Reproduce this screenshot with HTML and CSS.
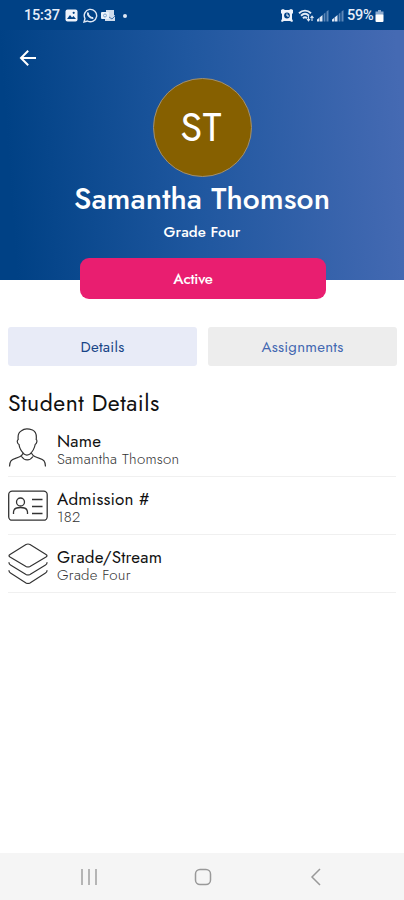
FILE: index.html
```
<!DOCTYPE html>
<html lang="en">
<head>
<meta charset="utf-8">
<title>Student Details</title>
<link rel="stylesheet" href="styles.css">
</head>
<body>
<div class="screen">
  <header class="statusbar">
    <div class="status-left">
      <span class="clock">15:37</span>
      <svg class="i-photo" width="13" height="13" viewBox="0 0 13 13"><rect x=".5" y=".5" width="12" height="12" rx="2" fill="#eef3fb"/><path d="M2 10l3-4 2 2.500 1.500-1.500L11 10z" fill="#004185"/><circle cx="8.700" cy="3.800" r="1.100" fill="#004185"/></svg>
      <svg class="i-chat" width="15" height="15" viewBox="0 0 15 15" fill="none" stroke="#dfe8f5"><path d="M1 14l1-3.500A6.200 6.200 0 1 1 4.500 13z" stroke-width="1.400"/><path d="M5 4.500c-.8 2.500 2.500 6 5.300 5.500" stroke-width="2"/></svg>
      <svg class="i-mail" width="15" height="13" viewBox="0 0 15 13"><path d="M5 1h8v5l1 .5V12H4V9H5z" fill="#cfdcec"/><rect x="0" y="3" width="8" height="7" rx="1" fill="#e9f1fa"/><circle cx="4" cy="6.500" r="1.500" fill="none" stroke="#7fa3cb"/><path d="M8 8l3 2 3-3" fill="none" stroke="#4a78ad"/></svg>
      <span class="dot"></span>
    </div>
    <div class="status-right">
      <svg width="12" height="13" viewBox="0 0 12 13"><path d="M0 1l2-1 2 1h4l2-1 2 1v3l-1 1v5l1 2-1 1-2-1H3l-2 1-1-1 1-2V5L0 4z" fill="#eef3fb"/><circle cx="6" cy="6.500" r="2.900" fill="#004185"/><path d="M6 4.500V7h2" stroke="#fff" fill="none"/></svg>
      <svg class="i-wifi" width="16" height="13" viewBox="0 0 16 13" fill="none" stroke="#e0e9f5" stroke-width="1.900"><path d="M1 4.200c3.500-3.400 8.500-3.400 12 0M3 6.700c2.400-2.200 5.600-2.200 8 0M5 9.200c1.300-1.200 2.700-1.200 4 0"/><path d="M10.500 7v4.500M9 10l1.500 1.800L12 10M14 12V7.500M12.500 9L14 7.200 15.500 9" stroke-width="1.100"/></svg>
      <svg class="i-signal" width="12" height="12" viewBox="0 0 12 12"><path d="M0 11.500V9.500L2 8v3.500zM2.500 11.500V7.500l3-2.500v6.500z" fill="#dfe8f5"/><path d="M6.700 11.500V4l1.700-1.500v9zM9.500 11.500V1.500L11.500 0v11.500z" fill="#5d87b7"/></svg>
      <svg class="i-signal" width="12" height="12" viewBox="0 0 12 12"><path d="M0 11.500V9.500L2 8v3.500zM2.500 11.500V7.500l3-2.500v6.500z" fill="#dfe8f5"/><path d="M6.700 11.500V4l1.700-1.500v9zM9.500 11.500V1.500L11.500 0v11.500z" fill="#5d87b7"/></svg>
      <span class="percent">59%</span>
      <svg width="9" height="12" viewBox="0 0 9 12"><path d="M3 0h3v1.500h2.500V5h-8V1.500H3z" fill="#8eabcf"/><rect x=".5" y="4.500" width="8" height="7.500" rx="1" fill="#fff"/></svg>
    </div>
  </header>
  <section class="hero">
    <svg class="back" width="18" height="18" viewBox="0 0 18 18" fill="none" stroke="#fff" stroke-width="2"><path d="M17 9H2.500M9.200 1.800L2 9l7.200 7.200"/></svg>
    <div class="avatar"><span class="initials">ST</span></div>
    <h1 class="name">Samantha Thomson</h1>
    <p class="grade">Grade Four</p>
    <div class="status"><span class="status-text">Active</span></div>
  </section>
  <nav class="tabs">
    <div class="tab tab-on">Details</div>
    <div class="tab">Assignments</div>
  </nav>
  <main class="details">
    <h2 class="heading">Student Details</h2>
    <div class="row">
      <svg class="icon" width="40" height="42" viewBox="0 0 40 42" fill="none" stroke="#333" stroke-width="1.200"><path d="M13.500 3.800C16 1.500 21 1.700 24.500 3c2.700 1.200 4.300 4.500 3.700 9.500 1.200.7.800 4-1 5-1 5-2.500 7-5.200 9.500-2 1.300-4.200 1.300-6 0-2.500-2.500-4.400-4.500-5-9.500-2-1-2.200-4-.8-5-.5-4 .3-7.200 3.300-8.700zM1.500 39.500c.2-5.500 1.700-7 6-8.200 4-1.100 6-1.700 7.700-5.300M37.500 39.500c-.2-5.500-1.700-7-6-8.200-4-1.100-6-1.700-8.200-5.300M13.500 29.500c3 4.500 8.500 4.500 11.500 0"/></svg>
      <div class="text"><span class="label">Name</span><span class="value">Samantha Thomson</span></div>
    </div>
    <div class="row">
      <svg class="icon" width="40" height="42" viewBox="0 0 40 42" fill="none" stroke="#333" stroke-width="1.300"><rect x=".7" y="6.200" width="38.500" height="29" rx="3.500"/><circle cx="12.500" cy="17" r="4"/><path d="M5.500 29v-2c0-4 3-4.500 7-4.500s7 .5 7 4.500v2M24 14.500h10.500M24 21.500h10.500M24 28.500h10.500"/></svg>
      <div class="text"><span class="label">Admission #</span><span class="value">182</span></div>
    </div>
    <div class="row">
      <svg class="icon" width="40" height="42" viewBox="0 0 40 42" fill="none" stroke="#333" stroke-width="1.200"><path d="M18 1.500q2-1 4 0L38 11.500q2 1.300 0 2.600L22 23.500q-2 1-4 0L2 14.100q-2-1.300 0-2.600zM1.200 19.300q-.6 1.700 1.300 2.700L18 31.500q2 1 4 0L37.500 22q1.900-1 1.300-2.700M1.200 27.300q-.6 1.700 1.300 2.700L18 40q2 1 4 0L37.500 30q1.900-1 1.300-2.700"/></svg>
      <div class="text"><span class="label">Grade/Stream</span><span class="value">Grade Four</span></div>
    </div>
  </main>
  <footer class="navbar">
    <svg width="18" height="18" viewBox="0 0 18 18" stroke="#aaa" stroke-width="1.700"><path d="M2 1v16M9 1v16M16 1v16"/></svg>
    <svg width="18" height="18" viewBox="0 0 18 18" fill="none" stroke="#999" stroke-width="1.500"><rect x="1.500" y="1.500" width="15" height="15" rx="4.500"/></svg>
    <svg width="18" height="18" viewBox="0 0 18 18" fill="none" stroke="#999" stroke-width="1.500"><path d="M13 1L5 9l8 8"/></svg>
  </footer>
</div>
</body>
</html>
```
FILE: styles.css
```
* { box-sizing: border-box; }
body { margin: 0; background: #fff; font-family: Jost, Lato, sans-serif; }
svg { display: block; flex: none; }
h1, h2, p { margin: 0; white-space: nowrap; }
.screen { width: 404px; height: 900px; display: flex; flex-direction: column; overflow: hidden; }
.statusbar { height: 30px; background: #004185; color: #e6eef9; display: flex; justify-content: space-between; align-items: center; padding: 1px 20px 0 24px; font: 500 14.5px/20px Roboto, sans-serif; }
.status-left, .status-right { display: flex; align-items: center; }
.clock { width: 36px; letter-spacing: -.2px; }
.i-photo { margin-left: 5px; }
.i-chat { margin-left: 5px; }
.i-mail { margin-left: 3px; }
.dot { width: 4px; height: 4px; border-radius: 2px; background: #dfe8f5; margin-left: 7px; }
.i-wifi { margin-left: 5px; }
.i-signal { margin-left: 3px; }
.percent { margin-left: 3px; width: 28px; letter-spacing: -.3px; }
.hero { height: 250px; background: linear-gradient(86deg, #004185 4%, #1f579f 48%, #456ab3 98%); color: #fff; display: flex; flex-direction: column; align-items: center; }
.back { align-self: flex-start; margin: 19px 0 0 19px; }
.avatar { width: 99px; height: 99px; flex: none; margin-top: 11px; border-radius: 50%; background: #866000; border: 1px solid #a09072; display: flex; align-items: center; justify-content: center; }
.initials { font-size: 40px; line-height: 40px; letter-spacing: .5px; padding: 0 2px 2px 0; }
.name { font-size: 30px; line-height: 36px; margin-top: 4px; font-weight: 500; letter-spacing: .1px; }
.grade { font-size: 15px; line-height: 20px; margin-top: 5px; font-weight: 500; letter-spacing: .1px; }
.status { width: 246px; height: 41px; flex: none; margin: 16px 0 0 1px; border-radius: 9px; background: #e91e70; display: flex; align-items: center; justify-content: center; padding: 1px 19px 0 0; }
.status-text { font-size: 15px; font-weight: 500; letter-spacing: -.2px; }
.tabs { display: grid; grid-template-columns: 189px 189px; gap: 11px; padding: 47px 8px 0; }
.tab { height: 39px; border-radius: 3px; background: #ededed; color: #4267b1; display: flex; align-items: center; justify-content: center; font-size: 15px; font-weight: 400; letter-spacing: .25px; }
.tab-on { background: #e8ebf7; color: #174486; }
.details { padding: 22px 8px 0; flex: 1; }
.heading { font-size: 23px; line-height: 30px; height: 31px; color: #111; font-weight: 400; letter-spacing: .5px; }
.row { height: 58px; display: flex; align-items: center; gap: 9px; border-bottom: 1px solid #f0f0f0; }
.text { display: flex; flex-direction: column; align-items: flex-start; white-space: nowrap; padding-top: 5px; }
.label { font-size: 17px; line-height: 18px; font-weight: 400; color: #111; letter-spacing: .2px; }
.value { font-size: 15px; line-height: 18px; font-weight: 300; color: #333; letter-spacing: .25px; }
.navbar { height: 47px; background: #f5f5f5; display: flex; justify-content: space-between; align-items: center; padding: 0 79px 0 80px; }
```
